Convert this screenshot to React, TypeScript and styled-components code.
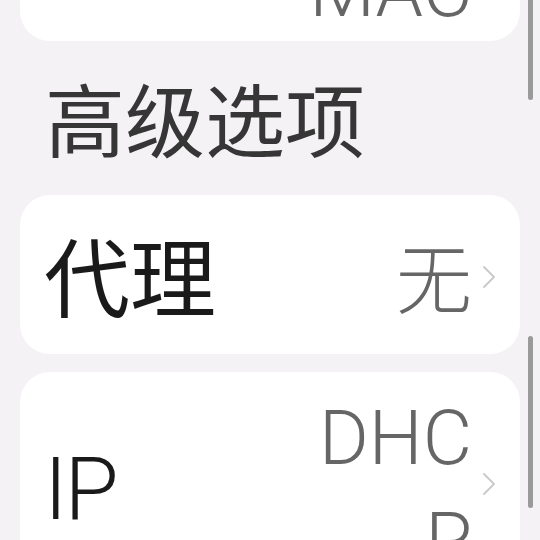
import React from "react";
import styled, { createGlobalStyle } from "styled-components";

const Global = createGlobalStyle`
  html, body { margin: 0; padding: 0; background: #f5f2f5; }
  body { font-family: "Roboto", "Noto Sans CJK SC", sans-serif; }
`;

const Viewport = styled.div`
  position: relative;
  width: 540px;
  height: 540px;
  overflow: hidden;
  background: #f5f2f5;
`;

const Scroller = styled.div<{ $offset: number }>`
  display: flex;
  flex-direction: column;
  padding: 0 20px;
  margin-top: ${(p) => -p.$offset}px;
`;

const Card = styled.div`
  background: #ffffff;
  border-radius: 30px;
  margin-bottom: 18px;
`;

const Row = styled.div`
  display: flex;
  align-items: center;
  min-height: 159px;
  box-sizing: border-box;
  padding: 15px 24px 0 24px;
`;

const Title = styled.div<{ $latin?: boolean }>`
  flex: 1 1 auto;
  font-family: "Roboto", "Noto Sans CJK SC", sans-serif;
  font-size: ${(p) => (p.$latin ? 88 : 86)}px;
  letter-spacing: ${(p) => (p.$latin ? -3 : 0)}px;
  line-height: 112px;
  font-weight: ${(p) => (p.$latin ? 300 : 400)};
  color: #1a1a1a;
`;

const Value = styled.div`
  flex: 0 1 auto;
  max-width: 176px;
  text-align: right;
  overflow-wrap: anywhere;
  font-family: "Roboto", "Noto Sans CJK SC", sans-serif;
  font-size: 76px;
  line-height: 102px;
  font-weight: 300;
  color: #666666;
`;

const Chevron = styled.svg`
  flex: 0 0 auto;
  width: 14px;
  height: 24px;
  margin-left: 10px;
  margin-bottom: 10px;
`;

const SectionHeader = styled.div`
  padding: 5px 5px 27px 25px;
  font-family: "Noto Sans CJK SC", sans-serif;
  font-size: 80px;
  line-height: 1.3;
  font-weight: 400;
  color: #363636;
`;

const ScrollThumb = styled.div<{ $top: number; $height: number }>`
  position: absolute;
  right: 7px;
  width: 5px;
  border-radius: 3px;
  background: #9a9a9a;
  top: ${(p) => p.$top}px;
  height: ${(p) => p.$height}px;
`;

const Arrow = () => (
  <Chevron viewBox="0 0 14 24">
    <path d="M2 2 L12 12 L2 22" fill="none" stroke="#c9c9c9" strokeWidth="1.8" strokeLinecap="round" strokeLinejoin="round" />
  </Chevron>
);

type Item = { title: string; value: string; latin?: boolean };

const ItemCard = ({ title, value, latin }: Item) => (
  <Card>
    <Row>
      <Title $latin={latin}>{title}</Title>
      <Value>{value}</Value>
      <Arrow />
    </Row>
  </Card>
);

export default function App() {
  return (
    <Viewport>
      <Global />
      <Scroller $offset={178}>
        <ItemCard title="隐私" value="随机MAC" />
        <SectionHeader>高级选项</SectionHeader>
        <ItemCard title="代理" value="无" />
        <ItemCard title="IP" value="DHCP" latin />
      </Scroller>
      <ScrollThumb $top={-20} $height={120} />
      <ScrollThumb $top={336} $height={172} />
    </Viewport>
  );
}
